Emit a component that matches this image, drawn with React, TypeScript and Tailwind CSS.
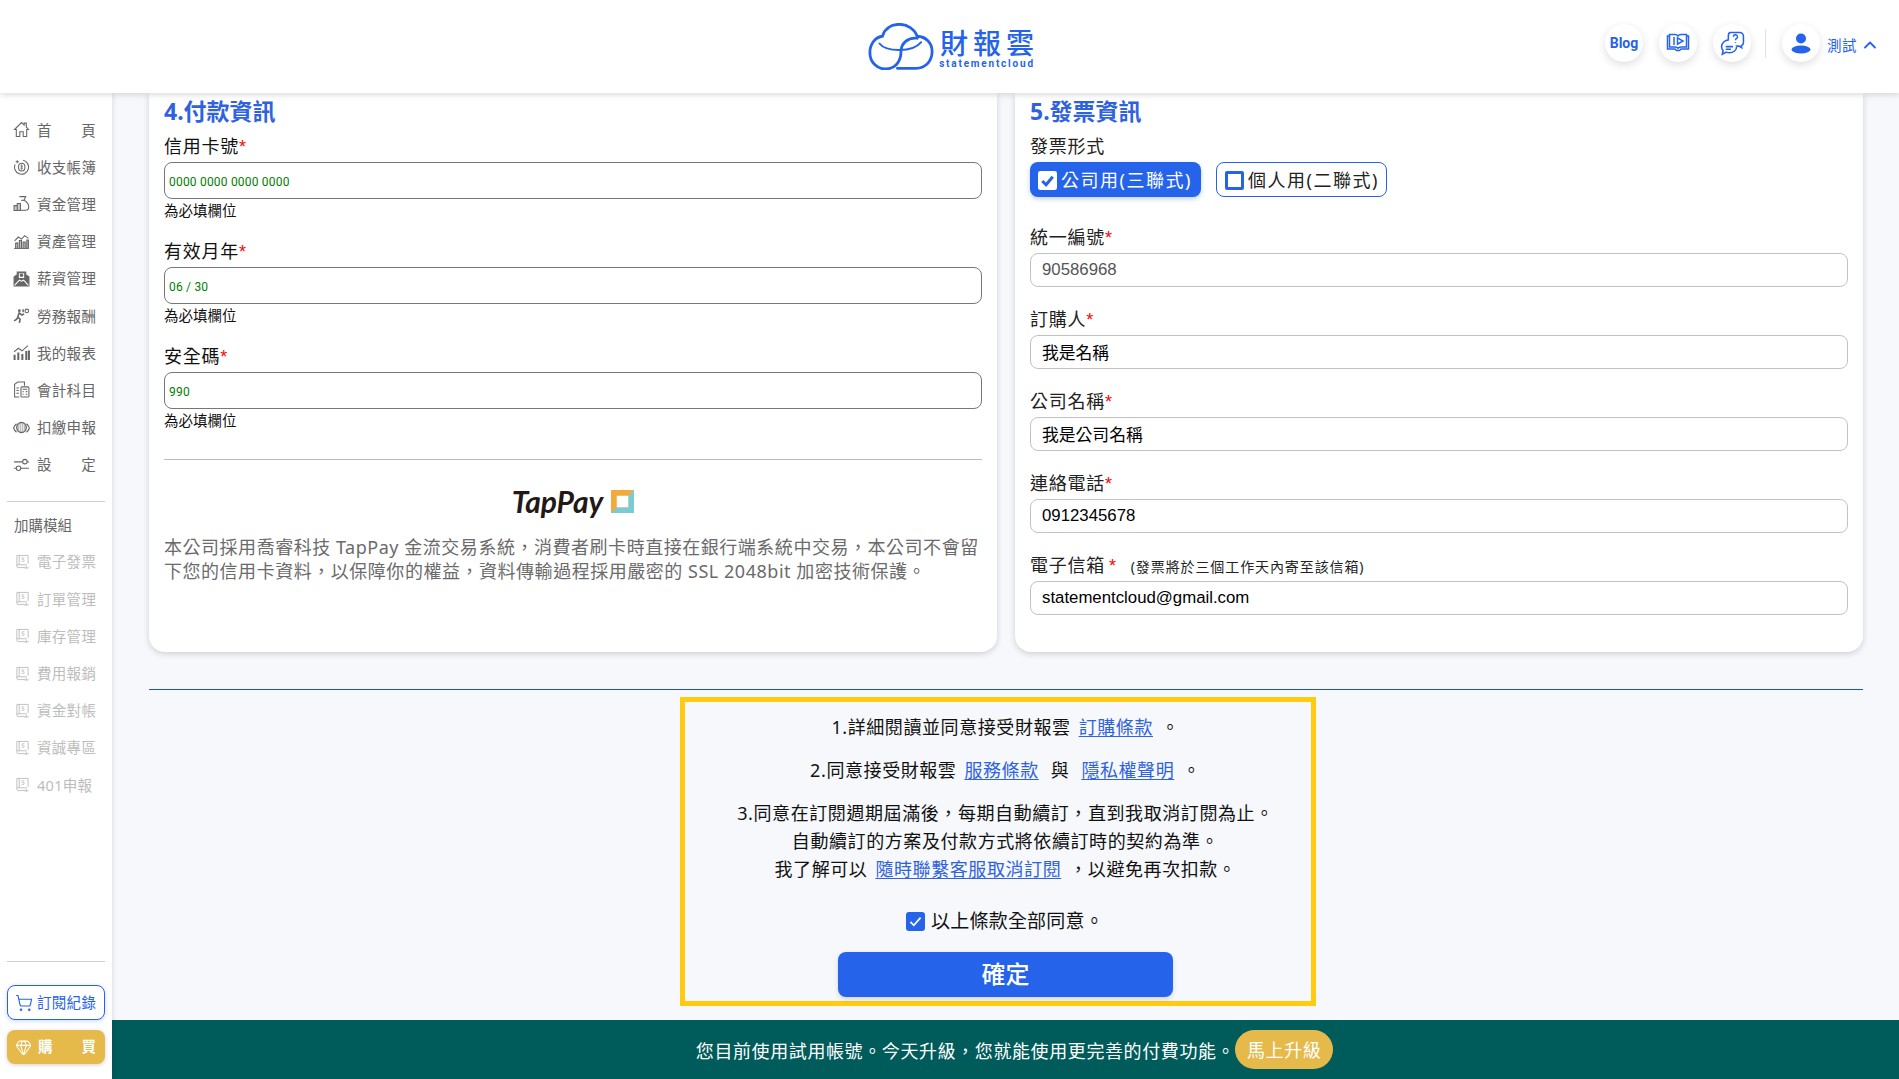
import React from "react";
import { ShoppingCart, Gem, ChevronUp } from "lucide-react";

const FONT = "[font-family:'Noto_Sans','Noto_Sans_CJK_TC',sans-serif]";

const I = ({ children, cls = "w-[17px] h-[17px]" }: { children: React.ReactNode; cls?: string }) => (
  <svg viewBox="0 0 16 16" fill="none" stroke="currentColor" strokeWidth="1" className={"shrink-0 " + cls}>
    {children}
  </svg>
);

const icons: Record<string, React.ReactNode> = {
  home: <path d="M1.500 8 8 1.500l2.500 2.300V2h2v3.600L14.500 8h-1.600v6.500H9.600v-4.300H6.400v4.300H3.100V8z" />,
  book: (
    <>
      <path d="M9.500 2.200A6.600 6.600 0 1 1 2 6" />
      <path d="M2.500 3.500h3M4 2v3" />
      <ellipse cx="8.200" cy="8.600" rx="3" ry="3.600" />
      <path d="M8.200 6v5.200M7 7.600h2.200M7 9.600h2.200" strokeWidth=".8" />
    </>
  ),
  bag: (
    <>
      <path d="M6 1.500h6L10.400 5c2.600 1.400 4.400 4 4.400 6.400 0 2-1.200 3-3 3H6.500" />
      <path d="M7.600 5h2.800" />
      <path d="M1 10h3v4.500H1zM4 8h3v6.500H4z" fill="currentColor" fillOpacity=".35" />
    </>
  ),
  assets: (
    <>
      <path d="M1 14.500h14" />
      <path d="M2.500 14V9.500h2V14M6 14V7h2v7M9.500 14V8.500h2V14M13 14V6.500h1.500V14" fill="currentColor" fillOpacity=".4" />
      <path d="M1.500 7.500 5 3.800l3 2 3-3.300 3.500 2.500" />
    </>
  ),
  salary: (
    <>
      <path d="M1 6.500 4 4.500V2h8v2.500l3 2V15H1z" fill="currentColor" />
      <path d="M5.500 3.200h5v4.300H5.500z" fill="#fff" stroke="none" />
      <circle cx="8" cy="5" r="1.600" fill="currentColor" stroke="none" />
      <path d="M1.500 14.500 6 9.600l2 1 2-1 4.500 4.900" stroke="#fff" />
    </>
  ),
  labor: (
    <>
      <circle cx="6" cy="3.500" r="1.300" fill="currentColor" stroke="none" />
      <path d="M6 5 4.500 9.500l2.200 2-.7 3.500M4.800 9 3.500 11.500 1 13M5.600 5.500 8.500 7.500l2-1" strokeWidth="1.500" />
      <circle cx="13" cy="3.700" r="1.700" />
      <path d="M9.500 2v3" strokeWidth="1.400" />
    </>
  ),
  chart: (
    <>
      <path d="M1.500 15V10M5 15V8M8.800 15V9.500M12.500 15V6.500M15 15V6" strokeWidth="1.900" />
      <path d="M1 7.500 5 4l3.500 2.400L14 1.500" />
    </>
  ),
  ledger: (
    <>
      <path d="M6 15H1.500V3l3-2h6.300v3.500" />
      <rect x="7.500" y="5.500" width="7.500" height="9.500" rx="1" />
      <path d="M9 7.800h4.500M9 10h1M12 10h1.500M9 12.500h1M12 12.500h1.500M3.200 6.500h2.300M3.200 9h2.300M3.200 11.500h2.300" />
    </>
  ),
  tax: (
    <>
      <ellipse cx="8" cy="8" rx="4.600" ry="4.800" fill="currentColor" fillOpacity=".45" />
      <path d="M6.200 5v6M8 4.500v7M9.800 5v6" stroke="#fff" strokeWidth=".7" />
      <path d="M3.300 4.500C1.500 6 .8 7.500.6 8.500c.5 1.600 1.500 3 2.700 4M12.700 4.500c1.800 1.500 2.500 3 2.700 4-.5 1.600-1.500 3-2.700 4" strokeWidth="1.100" />
    </>
  ),
  setting: (
    <>
      <path d="M1 5.500h8M13.500 5.500H15M1 11.500h2M7.500 11.500H15" strokeWidth="1.100" />
      <circle cx="11.200" cy="5.300" r="2.100" />
      <circle cx="5.200" cy="11.500" r="2.100" />
    </>
  ),
  module: (
    <>
      <path d="M10.500 14.500H3.500a1.500 1.500 0 0 1-1.500-1.500V1.500h12v9" />
      <path d="M2 11.500h10.500" />
      <path d="M4.500 1.500v10M10 14.800h4.500M12 12.500v3" />
      <path d="M10 4H8.300a.9.9 0 0 0 0 1.900h.6a.9.9 0 0 1 0 1.900H7" strokeWidth=".9" />
    </>
  ),
};

const mainMenu = [
  ["home", "首頁", true],
  ["book", "收支帳簿", false],
  ["bag", "資金管理", false],
  ["assets", "資產管理", false],
  ["salary", "薪資管理", false],
  ["labor", "勞務報酬", false],
  ["chart", "我的報表", false],
  ["ledger", "會計科目", false],
  ["tax", "扣繳申報", false],
  ["setting", "設定", true],
] as const;

const modules = ["電子發票", "訂單管理", "庫存管理", "費用報銷", "資金對帳", "資誠專區", "401申報"];

function Logo() {
  return (
    <div className="flex items-center gap-[1px]">
      <svg viewBox="144 66 198 142" className="w-[66px] h-[47px]" fill="none" stroke="#2563eb" strokeWidth="8.500" strokeLinecap="round">
        <path d="M232 203H288C320 203 337 178 337 152C337 126 318 107 292 106C284 84 262 70 238 70C212 70 193 84 187 106C165 108 149 130 149 155C149 184 170 205 196 205C224 205 243 184 243 152C243 128 264 108 292 112" />
        <path d="M178 128C196 152 276 158 304 124" strokeWidth="6" />
      </svg>
      <div className="flex flex-col items-center text-[#2563eb] mt-[4px]">
        <span className="text-[28px] leading-[30px] tracking-[5px] font-medium pl-[5px]">財報雲</span>
        <span className="text-[10px] leading-[11px] font-bold tracking-[1.800px] [font-family:'Roboto',sans-serif]">statementcloud</span>
      </div>
    </div>
  );
}

function Round({ children }: { children: React.ReactNode }) {
  return (
    <div className="w-[38px] h-[38px] rounded-full bg-white shadow-[0_3px_9px_rgba(0,0,0,0.13)] flex items-center justify-center text-[#2563eb]">
      {children}
    </div>
  );
}

function Header() {
  return (
    <header className="relative z-20 h-[93px] shrink-0 bg-white shadow-[0_2px_6px_rgba(0,0,0,0.14)] flex items-center">
      <div className="flex-1 flex justify-center pl-[8px] pb-[1px]">
        <Logo />
      </div>
      <div className="absolute right-[19px] top-[24px] flex items-center">
        <div className="flex gap-[16px]">
          <Round>
            <span className="text-[14px] font-bold [font-family:'Roboto',sans-serif]">Blog</span>
          </Round>
          <Round>
            <svg viewBox="0 0 24 20" className="w-[24px] h-[20px]" fill="none" stroke="currentColor" strokeWidth="1.500">
              <path d="M3.500 3H1.500v13h7.500l1.500 1.500h3l1.500-1.500h7.500V3h-2" />
              <path d="M3.500 1.500h5.500c1.500 0 2.500.6 3 1.500.5-.9 1.500-1.500 3-1.500h5.500V14h-5.500c-1.500 0-2.500.5-3 1.200-.5-.7-1.500-1.200-3-1.200H3.500z" />
              <path d="M8 4v8" />
              <path d="M11.500 4.800 17 8l-5.500 3.200z" />
            </svg>
          </Round>
          <Round>
            <svg viewBox="0 0 24 24" className="w-[25px] h-[25px]" fill="none" stroke="currentColor" strokeWidth="1.500">
              <path d="M10 1.500h9a3.500 3.500 0 0 1 3.500 3.500v6a3.500 3.500 0 0 1-2 3.200l.3 1.800-2.600-1.500H13c-3 0-5-2-5-4.500V5c0-2 .5-3.500 2-3.500z" />
              <path d="M12.800 5.500a2 2 0 1 1 2.900 1.800c-.6.4-.9.7-.9 1.500M14.800 10.500v.8" strokeWidth="1.400" />
              <path d="M8.500 8.500C4.500 8.700 1.500 11.500 1.500 15c0 1.500.5 2.800 1.500 3.800l-.8 3.500 3.800-2c1 .4 2 .6 3 .6 4 0 7-2.600 7-6" fill="#fff" />
              <path d="M5.500 15h7M5.500 17.500h5" />
            </svg>
          </Round>
        </div>
        <div className="w-px h-[29px] bg-[#e3e3e3] ml-[14px] mr-[16px]" />
        <Round>
          <svg viewBox="0 0 24 24" className="w-[24px] h-[24px]" fill="currentColor">
            <circle cx="12" cy="7.500" r="5" />
            <ellipse cx="12" cy="18.500" rx="9.500" ry="4" />
          </svg>
        </Round>
        <span className="ml-[7px] pt-[6px] text-[14.500px] text-[#2563eb] tracking-[0.5px]">測試</span>
        <ChevronUp className="ml-[3px] mt-[4px] w-[20px] h-[20px] text-[#2563eb]" strokeWidth={2.200} />
      </div>
    </header>
  );
}

function Sidebar() {
  return (
    <aside className="relative z-10 w-[112px] shrink-0 bg-white shadow-[1px_0_5px_rgba(0,0,0,0.1)] flex flex-col px-[7px]">
      <nav className="pt-[18px] flex flex-col">
        {mainMenu.map(([k, t, sp]) => (
          <div key={t} className="h-[37.200px] flex items-center gap-[7px] pl-[6px] text-[#666]">
            <I>{icons[k]}</I>
            <span className={"w-[59px] whitespace-nowrap text-[14.500px] leading-[20px] tracking-[0.3px] " + (sp ? "[text-align-last:justify]" : "")}>{t}</span>
          </div>
        ))}
      </nav>
      <div className="mt-[18px] border-t border-[#cfcfcf]" />
      <div className="mt-[13px] pl-[7px] text-[14.500px] leading-[20px] text-[#666]">加購模組</div>
      <div className="mt-[8px] flex flex-col">
        {modules.map((t) => (
          <div key={t} className="h-[37.200px] flex items-center gap-[7px] pl-[8px] text-[#bdbdbd]">
            <I cls="w-[15px] h-[15px]">{icons.module}</I>
            <span className="whitespace-nowrap text-[14.500px] leading-[20px] tracking-[0.3px]">{t}</span>
          </div>
        ))}
      </div>
      <div className="mt-auto border-t border-[#cfcfcf]" />
      <button className="mt-[23px] h-[35px] rounded-[8px] border border-[#2563eb] bg-white flex items-center pl-[7px] gap-[4px] text-[#2563eb] shadow-[0_1px_4px_rgba(41,98,230,0.25)]">
        <ShoppingCart className="w-[18px] h-[18px]" strokeWidth={1.500} />
        <span className="text-[14.500px] tracking-[0.3px]">訂閱紀錄</span>
      </button>
      <button className="mt-[10px] mb-[15px] h-[34px] rounded-[8px] bg-[#e5b94a] flex items-center pl-[8px] pr-[9px] gap-[6px] text-white shadow-[0_1px_4px_rgba(0,0,0,0.18)]">
        <Gem className="w-[17px] h-[17px]" strokeWidth={1.500} />
        <span className="flex-1 text-[14.500px] font-bold [text-align-last:justify]">購買</span>
      </button>
    </aside>
  );
}

const Star = () => <span className="text-[#ff0000] [font-family:'Liberation_Sans',sans-serif]">*</span>;

function CardField({ label, value }: { label: string; value: string }) {
  return (
    <div className="mb-[17px]">
      <div className="h-[27px] text-[18px] leading-[27px] tracking-[0.75px] text-[#111]">
        {label}
        <Star />
      </div>
      <input
        readOnly
        value={value}
        className="mt-[2px] block w-full h-[37px] px-[4px] pt-[2px] border border-[#777] rounded-[8px] bg-white text-[12px] text-[#008000] tracking-[0.2px] outline-none [font-family:'Roboto',sans-serif]"
      />
      <div className="mt-[1px] h-[21px] text-[14.500px] leading-[21px] text-[#111]">為必填欄位</div>
    </div>
  );
}

function PaymentCard() {
  return (
    <section className="w-[848px] h-[559px] bg-white rounded-b-[16px] shadow-[0_2px_6px_rgba(0,0,0,0.16)] px-[15px]">
      <h2 className="h-[36px] text-[23px] leading-[36px] font-bold text-[#2f62e0] mb-[4px]">4.付款資訊</h2>
      <CardField label="信用卡號" value="0000 0000 0000 0000" />
      <CardField label="有效月年" value="06 / 30" />
      <CardField label="安全碼" value="990" />
      <div className="mt-[28px] border-t border-[#bdbdbd]" />
      <div className="mt-[22px] h-[38px] flex items-center justify-center gap-[8px]">
        <span className="text-[30px] italic font-bold text-[#231815] [font-family:'Lato',sans-serif]">TapPay</span>
        <svg viewBox="0 0 22 22" className="w-[23px] h-[23px]">
          <rect width="22" height="22" fill="#f3a93c" />
          <path d="M22 0V22H0L5.500 16.500H16.500V5.500Z" fill="#7acbd6" />
          <rect x="5.500" y="5.500" width="11" height="11" fill="#fff" />
        </svg>
      </div>
      <p className="mt-[15px] text-[18px] leading-[24px] tracking-[0.53px] text-[#6b6b6b]">
        本公司採用喬睿科技 TapPay 金流交易系統，消費者刷卡時直接在銀行端系統中交易，本公司不會留下您的信用卡資料，以保障你的權益，資料傳輸過程採用嚴密的 SSL 2048bit 加密技術保護。
      </p>
    </section>
  );
}

function InvoiceField({ label, value, note, muted }: { label: string; value: string; note?: string; muted?: boolean }) {
  return (
    <div className="mt-[19px]">
      <div className="h-[27px] text-[18px] leading-[27px] tracking-[0.75px] text-[#222]">
        {label}
        {note ? <span className="ml-[4px]"><Star /></span> : <Star />}
        {note && <span className="ml-[14px] text-[14px] tracking-[0.9px]">{note}</span>}
      </div>
      <input
        readOnly
        value={value}
        className={
          "mt-[2px] block w-full h-[34px] px-[11px] border border-[#c2c2c2] rounded-[8px] bg-white text-[16.800px] outline-none [font-family:'Liberation_Sans','Noto_Sans_CJK_TC',sans-serif] " +
          (muted ? "text-[#555]" : "text-black")
        }
      />
    </div>
  );
}

function Box({ filled }: { filled?: boolean }) {
  return filled ? (
    <svg viewBox="0 0 20 20" className="w-[19px] h-[19px] shrink-0">
      <rect width="20" height="20" rx="2.500" fill="#fff" />
      <path d="M4.500 10.500 8.500 14.500 15.500 6" fill="none" stroke="#2563eb" strokeWidth="3.200" />
    </svg>
  ) : (
    <span className="w-[19px] h-[19px] shrink-0 rounded-[2px] border-[3px] border-[#2563eb] bg-white" />
  );
}

function InvoiceCard() {
  return (
    <section className="w-[848px] h-[559px] bg-white rounded-b-[16px] shadow-[0_2px_6px_rgba(0,0,0,0.16)] px-[15px]">
      <h2 className="h-[36px] text-[23px] leading-[36px] font-bold text-[#2f62e0] mb-[4px]">5.發票資訊</h2>
      <div className="h-[27px] text-[18px] leading-[27px] tracking-[0.75px] text-[#222]">發票形式</div>
      <div className="mt-[2px] flex gap-[15px] mb-[27px]">
        <button className="w-[171px] h-[35px] pt-[2px] rounded-[8px] bg-[#2563eb] text-white flex items-center gap-[4px] pl-[8px] text-[18px] tracking-[1.500px] shadow-[0_2px_5px_rgba(41,98,230,0.3)]">
          <Box filled />
          公司用(三聯式)
        </button>
        <button className="w-[171px] h-[35px] pt-[2px] rounded-[8px] border border-[#2563eb] bg-white text-[#222] flex items-center gap-[4px] pl-[8px] text-[18px] tracking-[1.500px]">
          <Box />
          個人用(二聯式)
        </button>
      </div>
      <InvoiceField label="統一編號" value="90586968" muted />
      <InvoiceField label="訂購人" value="我是名稱" />
      <InvoiceField label="公司名稱" value="我是公司名稱" />
      <InvoiceField label="連絡電話" value="0912345678" />
      <InvoiceField label="電子信箱" value="statementcloud@gmail.com" note="(發票將於三個工作天內寄至該信箱)" />
    </section>
  );
}

const A = ({ children }: { children: React.ReactNode }) => (
  <a href="#" className="mx-[8px] text-[#2f62e0] underline underline-offset-2">
    {children}
  </a>
);

function Agreement() {
  return (
    <div className="ml-[531px] mt-[7px] w-[636px] h-[309px] border-[5px] border-[#ffca0f] pl-[15px] text-center text-[18px] leading-[28px] tracking-[0.58px] text-[#111]">
      <p className="mt-[11px]">
        1.詳細閱讀並同意接受財報雲<A>訂購條款</A>。
      </p>
      <p className="mt-[15px]">
        2.同意接受財報雲<A>服務條款</A><span className="mx-[4px]">與</span><A>隱私權聲明</A>。
      </p>
      <p className="mt-[15px]">3.同意在訂閱週期屆滿後，每期自動續訂，直到我取消訂閱為止。</p>
      <p>自動續訂的方案及付款方式將依續訂時的契約為準。</p>
      <p>
        我了解可以<A>隨時聯繫客服取消訂閱</A>，以避免再次扣款。
      </p>
      <label className="mt-[24px] h-[28px] flex items-center justify-center gap-[6px] pr-[1px]">
        <span className="w-[19px] h-[19px] rounded-[3px] bg-[#2563eb] flex items-center justify-center">
          <svg viewBox="0 0 20 20" className="w-[17px] h-[17px]">
            <path d="M4 10.500 8 14.500 16 5.500" fill="none" stroke="#fff" strokeWidth="2" />
          </svg>
        </span>
        <span className="text-[19px] tracking-[0.2px]">以上條款全部同意。</span>
      </label>
      <button className="mt-[17px] mx-auto block w-[335px] h-[45px] pb-[1px] rounded-[8px] bg-[#2563eb] text-white text-[24px] font-medium tracking-normal shadow-[0_2px_5px_rgba(0,0,0,0.15)]">
        確定
      </button>
    </div>
  );
}

export default function App() {
  return (
    <div className={"h-screen w-full overflow-hidden flex flex-col bg-[#f6f8fb] " + FONT}>
      <Header />
      <div className="flex-1 min-h-0 flex">
        <Sidebar />
        <main className="flex-1 min-w-0 flex flex-col">
          <div className="flex-1 min-h-0 pl-[37px] pr-[36px] overflow-hidden">
            <div className="flex gap-[18px]">
              <PaymentCard />
              <InvoiceCard />
            </div>
            <div className="mt-[37px] border-t border-[#1d4ed8]" />
            <Agreement />
          </div>
          <div className="h-[59px] shrink-0 bg-[#005b5b] flex items-center justify-center pl-[18px] text-white text-[18px] tracking-[0.6px]">
            <span className="pt-[3px]">您目前使用試用帳號。今天升級，您就能使用更完善的付費功能。</span>
            <button className="w-[98px] h-[39px] rounded-full bg-[#e5b94a] text-white text-[18px] pt-[1px]">馬上升級</button>
          </div>
        </main>
      </div>
    </div>
  );
}
